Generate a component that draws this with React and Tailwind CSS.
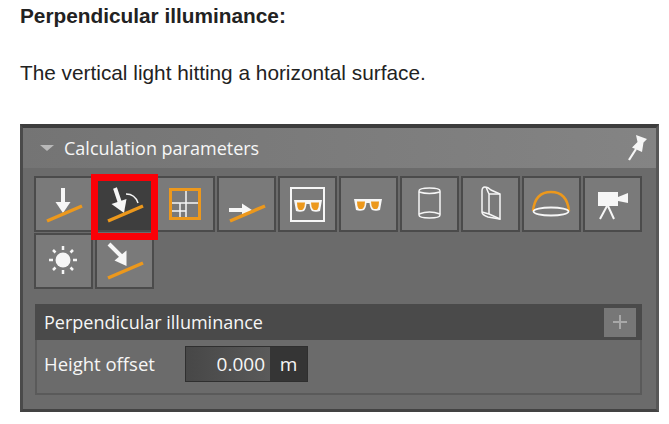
import React from "react";

const ORANGE = "#ec981c";
const WHITE = "#f6f6f6";

// drawn in button coordinates, each button is 59x56
function Slope() {
  return <path d="M13 45 L48 30" stroke={ORANGE} strokeWidth="3.500" fill="none" />;
}

function Glasses({ x, y }) {
  return (
    <g transform={`translate(${x} ${y})`}>
      <path d="M0 0 H28 L26 11 Q22 12.500 18 11 Q16 9 15.500 4 H12.500 Q12 9 10 11 Q6 12.500 2 11 Z" fill={WHITE} />
      <path d="M3 2.500 H11 Q11 7 9 9.500 Q6.500 10.500 4.500 9.500 Q3 7 3 2.500 Z M17 2.500 H25 Q25 7 23.500 9.500 Q21.500 10.500 19 9.500 Q17 7 17 2.500 Z" fill={ORANGE} />
    </g>
  );
}

const ICONS = [
  <>
    <path d="M29 12 V27" stroke={WHITE} strokeWidth="4" />
    <path d="M21.500 26 H36.500 L29 37 Z" fill={WHITE} />
    <Slope />
  </>,
  <>
    <path d="M20 12 L25 27" stroke={WHITE} strokeWidth="4" />
    <path d="M16.500 28 L31.500 23 L29 37 Z" fill={WHITE} />
    <path d="M31 18 Q40 18 43 27" stroke={WHITE} strokeWidth="1.500" fill="none" />
    <Slope />
  </>,
  <>
    <path d="M14.500 13.500 H43.500 V42.500 H14.500 Z" stroke={ORANGE} strokeWidth="3" fill="none" />
    <path d="M30 15 V41 M16 27 H42 M16 35 H30 M24 27 V41" stroke={WHITE} strokeWidth="1.500" fill="none" />
  </>,
  <>
    <path d="M12 34 H26" stroke={WHITE} strokeWidth="4" />
    <path d="M25 27.500 L35 34 L25 40.500 Z" fill={WHITE} />
    <path d="M13 45 L48 30" stroke={ORANGE} strokeWidth="3.500" fill="none" />
  </>,
  <>
    <rect x="13" y="12" width="33" height="33" stroke={WHITE} strokeWidth="2" fill="none" />
    <Glasses x={16} y={24} />
  </>,
  <Glasses x={15} y={23} />,
  <>
    <path d="M19 15 Q19 12 29.500 12 Q40 12 40 15 V39 Q40 42 29.500 42 Q19 42 19 39 Z" stroke={WHITE} strokeWidth="1.500" fill="none" />
    <path d="M19 16 Q29.500 19 40 16 M19 38 Q29.500 34 40 38" stroke={WHITE} strokeWidth="1.500" fill="none" />
  </>,
  <>
    <path d="M21 15 Q21 11 24 11 Q27 11 30 14 L39 18 V43 L27 41 Q21 39 21 36 Z" stroke={WHITE} strokeWidth="1.500" fill="none" />
    <path d="M25 11 Q27 16 28 18 L39 18 M28 18 V38 L39 43 M28 38 L21 36" stroke={WHITE} strokeWidth="1.500" fill="none" />
  </>,
  <>
    <path d="M11 35 Q13 16 29 16 Q45 16 47 35" stroke={ORANGE} strokeWidth="2.500" fill="none" />
    <ellipse cx="29" cy="35.500" rx="17.500" ry="4" stroke={WHITE} strokeWidth="1.800" fill="none" />
  </>,
  <>
    <rect x="15" y="16" width="20" height="14" fill={WHITE} />
    <path d="M35 21 L45 17 V27 L35 25 Z" fill={WHITE} />
    <path d="M24 30 L17 43 M25 30 L31 43" stroke={WHITE} strokeWidth="2" fill="none" />
  </>,
  <>
    <circle cx="29" cy="27" r="7.500" fill={WHITE} />
    <path d="M29 13 V17 M29 37 V41 M15 27 H19 M39 27 H43 M19 17 L21.500 19.500 M39 17 L36.500 19.500 M19 37 L21.500 34.500 M39 37 L36.500 34.500" stroke={WHITE} strokeWidth="2.500" fill="none" />
  </>,
  <>
    <path d="M14 11 L27 24" stroke={WHITE} strokeWidth="4" />
    <path d="M19.500 27.500 L31.500 17.500 L31.500 33 Z" fill={WHITE} />
    <Slope />
  </>,
];

function ToolButton({ children, selected }) {
  return (
    <div className={`relative w-[59px] h-[56px] border-2 border-[#4b4b4b] ${selected ? "bg-[#3e3e3e]" : "bg-[#7a7a7a]"}`}>
      <svg className="absolute -left-[2px] -top-[2px]" width="59" height="56" viewBox="0 0 59 56">
        {children}
      </svg>
      {selected && (
        <div className="absolute z-10 -left-[6px] -right-[6px] -top-[4px] h-[66px] border-[7px] border-[#fb0007]" />
      )}
    </div>
  );
}

export default function App() {
  return (
    <div className="w-[669px] h-[424px] bg-white overflow-hidden pl-[20px] pt-[4px] font-['Liberation_Sans',sans-serif] text-[#222222]">
      <h1 className="text-[20.800px] leading-[24px] font-bold">Perpendicular illuminance:</h1>
      <p className="mt-[33px] text-[20.800px] leading-[24px]">The vertical light hitting a horizontal surface.</p>

      <div className="mt-[39px] w-[639px] h-[288px] bg-[#6b6b6b] border-l-[3px] border-r-[3px] border-t-[4px] border-b-[3px] border-l-[#4a4a4a] border-r-[#575757] border-t-[#3d3d3d] border-b-[#434343] font-['Open_Sans',sans-serif] text-[#f6f6f6]">
        <div className="h-[40px] pl-[17px] pr-[9px] flex items-center justify-between bg-gradient-to-r from-[#747474] to-[#848484]">
          <div className="flex items-center gap-[10px]">
            <div className="w-0 h-0 border-l-[7px] border-r-[7px] border-t-[6px] border-l-transparent border-r-transparent border-t-[#b9b9b9]" />
            <span className="text-[18px] leading-[22px]">Calculation parameters</span>
          </div>
          <svg width="20" height="28" viewBox="0 0 20 28">
            <path d="M9 1 L20 5 L16.500 8.500 L15 18 L5 13.500 L10.500 8 Z" fill={WHITE} />
            <path d="M9 15 L2 26" stroke={WHITE} strokeWidth="2.200" />
          </svg>
        </div>

        <div className="pl-[11px] pt-[8px] flex flex-wrap gap-x-[2px] gap-y-[1px] w-[620px] h-[136px] content-start">
          {ICONS.map((icon, i) => (
            <ToolButton key={i} selected={i === 1}>{icon}</ToolButton>
          ))}
        </div>

        <div className="ml-[12px] w-[607px] h-[91px] border-2 border-t-0 border-[#5a5a5a]">
          <div className="-mx-[2px] h-[36px] pl-[9px] pr-[6px] flex items-center justify-between bg-[#4a4a4a]">
            <span className="text-[18px] leading-[22px]">Perpendicular illuminance</span>
            <div className="w-[32px] h-[29px] bg-[#777777] flex items-center justify-center">
              <svg width="16" height="16" viewBox="0 0 16 16">
                <path d="M8 1 V15 M1 8 H15" stroke="#a8a8a8" strokeWidth="2" />
              </svg>
            </div>
          </div>
          <div className="pl-[7px] pt-[6px] flex items-center">
            <span className="w-[141px] text-[18.500px] leading-[22px]">Height offset</span>
            <div className="flex h-[36px] border border-[#2f2f2f] text-[19px]">
              <div className="w-[84px] pr-[5px] flex items-center justify-end bg-gradient-to-r from-[#474747] to-[#5a5a5a]">0.000</div>
              <div className="w-[37px] flex items-center justify-center bg-[#353535]">m</div>
            </div>
          </div>
        </div>
      </div>
    </div>
  );
}
